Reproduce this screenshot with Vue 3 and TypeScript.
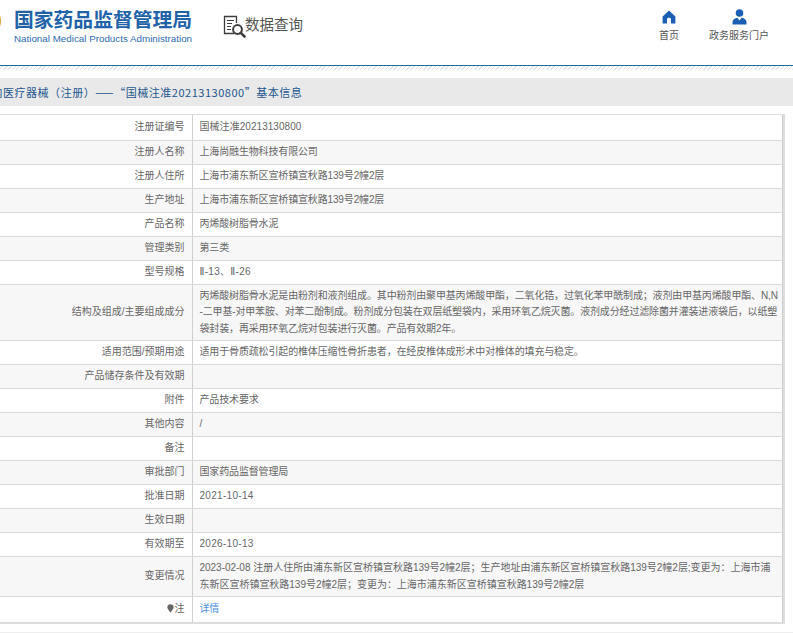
<script setup lang="ts">
interface Row { label: string; value: string; link?: boolean; pin?: boolean; loose?: boolean }
const rows: Row[] = [
  { label: '注册证编号', value: '国械注准20213130800' },
  { label: '注册人名称', value: '上海尚融生物科技有限公司' },
  { label: '注册人住所', value: '上海市浦东新区宣桥镇宣秋路139号2幢2层' },
  { label: '生产地址', value: '上海市浦东新区宣桥镇宣秋路139号2幢2层' },
  { label: '产品名称', value: '丙烯酸树脂骨水泥' },
  { label: '管理类别', value: '第三类' },
  { label: '型号规格', value: 'Ⅱ-13、Ⅱ-26' },
  { label: '结构及组成/主要组成成分', value: '丙烯酸树脂骨水泥是由粉剂和液剂组成。其中粉剂由聚甲基丙烯酸甲酯，二氧化锆，过氧化苯甲酰制成；液剂由甲基丙烯酸甲酯、N,N-二甲基-对甲苯胺、对苯二酚制成。粉剂成分包装在双层纸塑袋内，采用环氧乙烷灭菌。液剂成分经过滤除菌并灌装进液袋后，以纸塑袋封装，再采用环氧乙烷对包装进行灭菌。产品有效期2年。' },
  { label: '适用范围/预期用途', value: '适用于骨质疏松引起的椎体压缩性骨折患者，在经皮椎体成形术中对椎体的填充与稳定。' },
  { label: '产品储存条件及有效期', value: '' },
  { label: '附件', value: '产品技术要求' },
  { label: '其他内容', value: '/' },
  { label: '备注', value: '' },
  { label: '审批部门', value: '国家药品监督管理局' },
  { label: '批准日期', value: '2021-10-14' },
  { label: '生效日期', value: '' },
  { label: '有效期至', value: '2026-10-13' },
  { label: '变更情况', loose: true, value: '2023-02-08 注册人住所由浦东新区宣桥镇宣秋路139号2幢2层；生产地址由浦东新区宣桥镇宣秋路139号2幢2层;变更为：上海市浦东新区宣桥镇宣秋路139号2幢2层；变更为：上海市浦东新区宣桥镇宣秋路139号2幢2层' },
  { label: '注', value: '详情', link: true, pin: true },
]
const isDigits = (v: string): boolean => /^\d{4}-\d{2}-\d{2}$/.test(v) || v.includes('Ⅱ')
const isCert = (v: string): boolean => /^国械注准\d+$/.test(v)
</script>

<template>
  <div class="page">
    <header class="header">
      <div class="brand">
        <svg class="emblem" width="36" height="36" viewBox="0 0 36 36">
          <circle cx="18" cy="18" r="17" fill="#d8a92e" />
          <circle cx="18" cy="18" r="13" fill="#c8382e" />
        </svg>
        <div class="brand-text">
          <div class="brand-cn">国家药品监督管理局</div>
          <div class="brand-en">National Medical Products Administration</div>
        </div>
      </div>
      <div class="query">
        <svg class="query-icon" width="23" height="23" viewBox="0 0 23 23" fill="none" stroke="#3d3d3d">
          <path d="M11 18.5H1.5V1.5H13.5V8" stroke-width="1.3" />
          <path d="M4 5.5H11M4 8.5H9M4 11.5H8M4 14.5H8" stroke-width="1.2" />
          <circle cx="14.5" cy="14.5" r="4.4" stroke-width="2" />
          <path d="M17.8 17.8L21.5 21.5" stroke-width="2.6" stroke-linecap="round" />
        </svg>
        <span class="query-text">数据查询</span>
      </div>
      <nav class="nav">
        <a class="nav-item home">
          <svg width="14" height="14" viewBox="0 0 14 14">
            <path fill="#1a5fb4" d="M7 0.5L0.6 6.4V13.5H5V9.2C5 8.4 5.9 7.8 7 7.8S9 8.4 9 9.2V13.5H13.4V6.4Z" />
          </svg>
          <span>首页</span>
        </a>
        <a class="nav-item portal">
          <svg width="15" height="16" viewBox="0 0 15 16">
            <circle cx="7.5" cy="4" r="3.8" fill="#1a5fb4" />
            <path fill="#1a5fb4" d="M0.5 15.5V13C0.5 10.8 2.8 9.2 5.4 8.7L7.5 11.5L9.6 8.7C12.2 9.2 14.5 10.8 14.5 13V15.5Z" />
          </svg>
          <span>政务服务门户</span>
        </a>
      </nav>
    </header>
    <div class="hatch"></div>
    <h2 class="title">境内医疗器械（注册）——“国械注准20213130800”基本信息</h2>
    <div class="table-wrap">
      <table class="info">
        <tbody>
          <tr v-for="row in rows" :key="row.label">
            <td class="label">
              <svg v-if="row.pin" class="pin" width="7" height="9" viewBox="0 0 7 9">
                <path fill="#666" d="M3.5 0.3C1.6 0.3 0.3 1.6 0.3 3.3C0.3 5.2 2.4 6.4 3.5 8.8C4.6 6.4 6.7 5.2 6.7 3.3C6.7 1.6 5.4 0.3 3.5 0.3Z" />
              </svg>{{ row.label }}
            </td>
            <td class="value" :class="{ digits: isDigits(row.value), cert: isCert(row.value), loose: row.loose }">
              <a v-if="row.link" class="link">{{ row.value }}</a>
              <template v-else>{{ row.value }}</template>
            </td>
          </tr>
        </tbody>
      </table>
    </div>
    <div class="footer-line"></div>
  </div>
</template>

<style scoped>
.page {
  width: 833px;
  height: 633px;
  margin-left: -40px;
  font-family: "Liberation Sans", "DejaVu Sans", "Noto Sans CJK SC", sans-serif;
  color: #666;
  overflow: hidden;
}
.header {
  height: 65px;
  display: flex;
  align-items: flex-start;
  border-bottom: 1px solid #1b6f9c;
}
.brand {
  display: flex;
  width: 263px;
  flex: none;
  padding-left: 6px;
  box-sizing: border-box;
}
.emblem {
  margin-top: 3px;
}
.brand-text {
  margin-left: 12px;
  padding-top: 8px;
}
.brand-cn {
  font-size: 19.8px;
  line-height: 24px;
  font-weight: 700;
  color: #2162a8;
  white-space: nowrap;
}
.brand-en {
  margin-top: 1px;
  font-size: 9.8px;
  line-height: 12px;
  color: #2c6bb0;
  white-space: nowrap;
}
.query {
  display: flex;
  align-items: flex-start;
  height: 23px;
  margin-top: 15px;
}
.query-text {
  font-size: 14.5px;
  line-height: 20px;
  color: #555;
  margin-left: -1px;
}
.nav {
  display: flex;
  margin-left: auto;
  margin-right: 24px;
  padding-top: 9px;
}
.nav-item {
  display: flex;
  flex-direction: column;
  align-items: center;
  font-size: 10px;
  line-height: 14px;
  color: #555;
  white-space: nowrap;
}
.nav-item svg {
  height: 16px;
  margin-bottom: 4px;
}
.home {
  margin-right: 30px;
}
.hatch {
  height: 4px;
  background: repeating-linear-gradient(135deg, #dfe5e8 0 1px, #fff 1px 3px);
}
.title {
  margin: 8px 0 8px;
  height: 28px;
  background: #e9e9e9;
  font-family: "Noto Sans CJK SC", sans-serif;
  font-size: 11px;
  letter-spacing: 0.52px;
  line-height: 28px;
  font-weight: 400;
  color: #23578f;
  padding-left: 20px;
  white-space: nowrap;
}
.table-wrap {
  width: 825px;
  box-sizing: border-box;
  border: 1px solid #ddd;
  border-width: 1px 2px 2px 0;
}
.info {
  width: 100%;
  border-collapse: collapse;
  table-layout: fixed;
  border-right: 1px solid #ccc;
  font-size: 10px;
  line-height: 16.5px;
}
.info tr {
  height: 24px;
}
.info tr:nth-child(even) {
  background: #f7f7f7;
}
.info tr:first-child {
  height: 25px;
}
.info td {
  border-bottom: 1px solid #d8d8d8;
  padding: 3px 4px 3px 7px;
}
.info tr:last-child {
  height: 25.5px;
}
.info tr:last-child td {
  border-bottom: 0;
}
.info td.label {
  width: 232px;
  box-sizing: border-box;
  text-align: right;
  padding-right: 7px;
  border-right: 1px solid #d0d0d0;
}
.info td.value {
  letter-spacing: -0.15px;
  word-break: break-all;
}
.info td.digits {
  letter-spacing: 0.3px;
}
.info td.cert {
  letter-spacing: 0.05px;
}
.info td.loose {
  letter-spacing: -0.02px;
}
.pin {
  vertical-align: -1px;
  margin-right: 1px;
}
.link {
  color: #4a90e2;
}
.footer-line {
  margin-top: 8px;
  border-top: 1px solid #eee;
}
</style>

<style>
html, body { overflow: hidden; background: #fff; }
</style>
